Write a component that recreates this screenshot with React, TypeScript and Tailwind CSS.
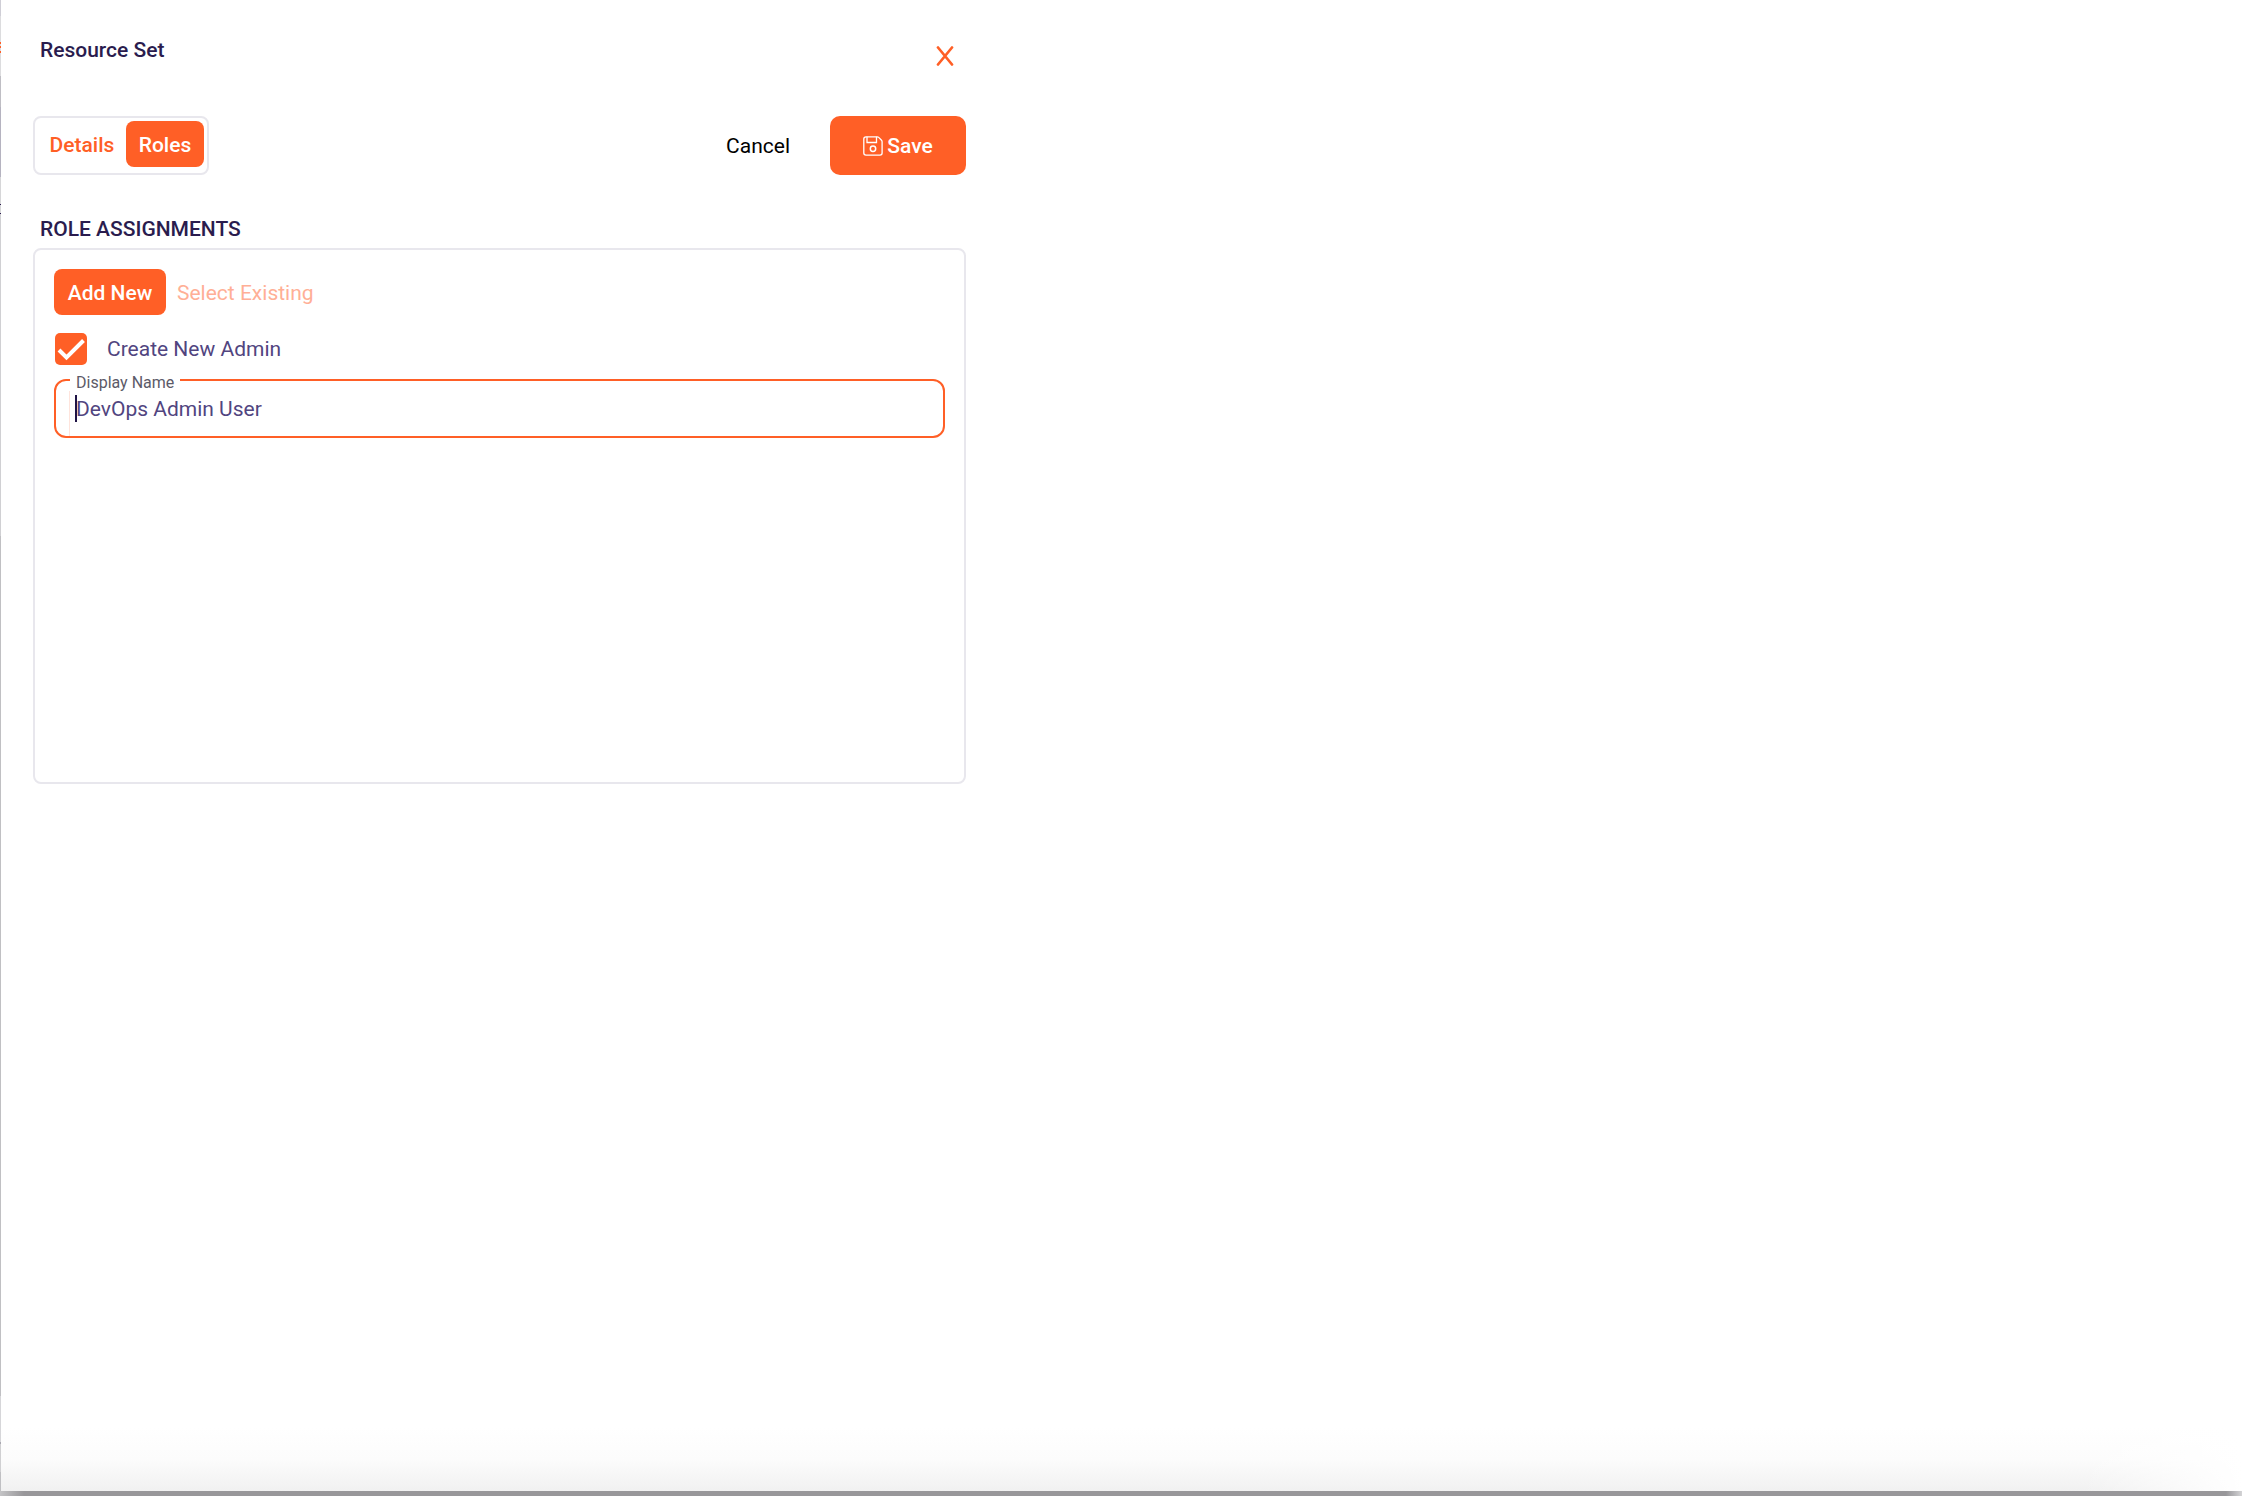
import React, { useState } from "react";

type Tab = "details" | "roles";

// slices of the page behind the drawer, visible along its left edge
const edgeSlices = [
  { height: 16, color: "bg-[#cfced6]" },
  { height: 26, color: "bg-[#dcdcde]" },
  { height: 2, color: "bg-[#ff5f26]" },
  { height: 2, color: "bg-[#dcdcde]" },
  { height: 2, color: "bg-[#ff5f26]" },
  { height: 3, color: "bg-[#dcdcde]" },
  { height: 2, color: "bg-[#ff5f26]" },
  { height: 23, color: "bg-[#dcdcde]" },
  { height: 31, color: "bg-[#bfbec4]" },
  { height: 70, color: "bg-[#b5b3c0]" },
  { height: 27, color: "bg-[#d6d6d8]" },
  { height: 1, color: "bg-[#2a1c4e]" },
  { height: 8, color: "bg-[#d6d6d8]" },
  { height: 1, color: "bg-[#2a1c4e]" },
  { height: 322, color: "bg-[#d0d0d3]" },
  { height: 860, color: "bg-[#c0c0c3]" },
  { height: 46, color: "bg-[#d6d6d9]" },
  { height: 2, color: "bg-[#a9a8b0]" },
  { height: 28, color: "bg-[#d0d0d2]" },
];

function SaveIcon() {
  return (
    <svg
      width="20"
      height="20"
      viewBox="0 0 20 20"
      fill="none"
      stroke="currentColor"
      strokeWidth="1.3"
      aria-hidden="true"
    >
      <path d="M3 .8h11.2c.6 0 1.100.2 1.500.6l2.600 2.600c.5.5.8 1.100.8 1.800V17c0 1.200-.9 2.100-2.100 2.100H3c-1.200 0-2.200-.9-2.200-2.100V3C.8 1.800 1.800.8 3 .8Z" />
      <path d="M4 .8v5.700h9.500V.8" />
      <circle cx="10" cy="12.800" r="2.700" strokeWidth="1.500" />
    </svg>
  );
}

function CloseIcon() {
  return (
    <svg
      width="18"
      height="20"
      viewBox="0 0 18 20"
      fill="none"
      stroke="currentColor"
      strokeWidth="2.700"
      strokeLinecap="round"
      aria-hidden="true"
    >
      <path d="M2 1.500 16 18.500M16 1.500 2 18.500" />
    </svg>
  );
}

export default function App() {
  const [tab, setTab] = useState<Tab>("roles");
  const [createAdmin, setCreateAdmin] = useState(true);
  const [name, setName] = useState("DevOps Admin User");

  const tabColor = (active: boolean) =>
    active ? "bg-[#ff5f26] text-white" : "text-[#ff5f26]";

  return (
    <div className="flex min-h-screen flex-col bg-white font-[Roboto,sans-serif] text-[21px] leading-7 text-[#2a1c4e]">
      <div className="flex grow">
        <div className="flex w-px flex-col bg-[#c0c0c3]" aria-hidden="true">
          {edgeSlices.map((s, i) => (
            <div key={i} className={s.color} style={{ height: s.height }} />
          ))}
        </div>

        <div className="flex min-w-0 grow flex-col">
          <main className="grow px-8 pt-9">
            <div className="w-full max-w-[933px]">
              <header className="flex h-20 items-start justify-between pr-3 pl-[7px]">
                <h1 className="font-medium">Resource Set</h1>
                <button
                  type="button"
                  aria-label="Close"
                  className="flex h-10 items-center text-[#ff5f26]"
                >
                  <CloseIcon />
                </button>
              </header>

              <div className="flex items-center justify-between">
                <div className="flex h-[59px] rounded-lg border-2 border-[#e8e7ed] p-[3px]">
                  <button
                    type="button"
                    onClick={() => setTab("details")}
                    className={`h-[46px] w-[88px] rounded-lg pt-[2px] font-medium ${tabColor(tab === "details")}`}
                  >
                    Details
                  </button>
                  <button
                    type="button"
                    onClick={() => setTab("roles")}
                    className={`h-[46px] w-[78px] rounded-lg pt-[2px] font-medium ${tabColor(tab === "roles")}`}
                  >
                    Roles
                  </button>
                </div>
                <div className="flex items-center">
                  <button
                    type="button"
                    className="h-[59px] px-10 text-black"
                  >
                    Cancel
                  </button>
                  <button
                    type="button"
                    className="flex h-[59px] w-34 items-center justify-center gap-1 rounded-[10px] bg-[#ff5f26] font-medium text-white"
                  >
                    <SaveIcon />
                    Save
                  </button>
                </div>
              </div>

              <h2 className="mt-10 pl-[7px] font-medium">ROLE ASSIGNMENTS</h2>

              <section className="mt-[5px] min-h-[536px] rounded-lg border-2 border-[#e8e7ed] p-[19px]">
                <div className="flex items-center">
                  <button
                    type="button"
                    className="h-[46px] w-28 rounded-lg bg-[#ff5f26] pt-[2px] font-medium text-white"
                  >
                    Add New
                  </button>
                  <button
                    type="button"
                    disabled
                    className="h-[46px] px-[11px] pt-[2px] text-[#ffaf96]"
                  >
                    Select Existing
                  </button>
                </div>

                <label className="mt-[18px] flex items-center gap-5 pl-px text-[#51457f]">
                  <span className="grid size-8 place-items-center rounded-[5px] bg-[#ff5f26]">
                    <input
                      type="checkbox"
                      checked={createAdmin}
                      onChange={(e) => setCreateAdmin(e.target.checked)}
                      className="col-start-1 row-start-1 size-8 appearance-none rounded-[5px]"
                    />
                    {createAdmin && (
                      <svg
                        className="pointer-events-none col-start-1 row-start-1"
                        width="32"
                        height="32"
                        viewBox="0 0 32 32"
                        fill="none"
                        stroke="white"
                        strokeWidth="4"
                        aria-hidden="true"
                      >
                        <path d="M4 17 11.500 24.500 28.500 7.500" />
                      </svg>
                    )}
                  </span>
                  Create New Admin
                </label>

                <div className="relative mt-[14px]">
                  <input
                    id="display-name"
                    type="text"
                    value={name}
                    onChange={(e) => setName(e.target.value)}
                    className="block h-[59px] w-full rounded-xl border-2 border-[#ff5f26] px-5 text-[#51457f] outline-none"
                  />
                  <label
                    htmlFor="display-name"
                    className="absolute -top-2 left-4 bg-white px-[6px] text-base leading-6 text-[#5c5a68]"
                  >
                    Display Name
                  </label>
                  <span className="absolute top-3 bottom-[2px] left-[15px] w-px bg-[#ffe4dc]" />
                  <span className="absolute top-4 left-[21px] h-[27px] w-[2px] bg-[#1f1446]" />
                </div>
              </section>
            </div>
          </main>

          <div className="flex h-16" aria-hidden="true">
            <div className="grow bg-linear-to-b from-white via-[#fcfcfc] to-[#f1f1f1]" />
            <div className="w-40 bg-linear-to-b from-white via-[#fcfcfc] to-[#f1f1f1]">
              <div className="h-full bg-linear-to-r from-transparent to-white" />
            </div>
          </div>
        </div>
      </div>

      <div className="flex h-[5px] bg-[#98979a]" aria-hidden="true">
        <div className="w-6 bg-linear-to-r from-[#c4c4c6] to-[#98979a]" />
        <div className="grow" />
        <div className="w-4 bg-linear-to-r from-[#98979a] to-[#d4d4d6]" />
      </div>
    </div>
  );
}
